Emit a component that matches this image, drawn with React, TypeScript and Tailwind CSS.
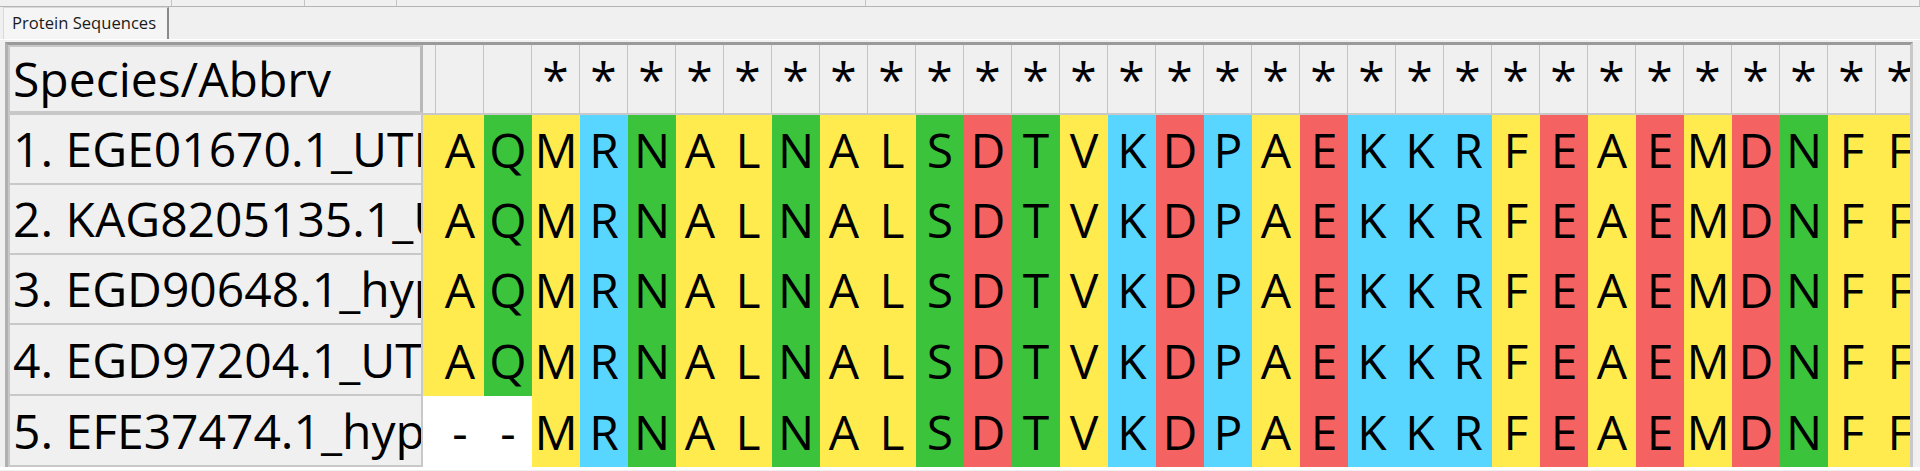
const seqA = 'AQMRNALNALSDTVKDPAEKKRFEAEMDNFF';
const seqB = '--MRNALNALSDTVKDPAEKKRFEAEMDNFF';

const rows = [
  { name: '1. EGE01670.1_UTR', lead: 'A', seq: seqA },
  { name: '2. KAG8205135.1_UTR', lead: 'A', seq: seqA },
  { name: '3. EGD90648.1_hypo', lead: 'A', seq: seqA },
  { name: '4. EGD97204.1_UTR', lead: 'A', seq: seqA },
  { name: '5. EFE37474.1_hypo', lead: '-', seq: seqB },
];

const residueColor: Record<string, string> = {
  A: 'bg-[#ffeb4e]',
  M: 'bg-[#ffeb4e]',
  L: 'bg-[#ffeb4e]',
  V: 'bg-[#ffeb4e]',
  F: 'bg-[#ffeb4e]',
  Q: 'bg-[#3bc43b]',
  N: 'bg-[#3bc43b]',
  S: 'bg-[#3bc43b]',
  T: 'bg-[#3bc43b]',
  R: 'bg-[#59d6ff]',
  K: 'bg-[#59d6ff]',
  P: 'bg-[#59d6ff]',
  D: 'bg-[#f46262]',
  E: 'bg-[#f46262]',
  '-': 'bg-white',
};

const font = { fontFamily: '"Open Sans", "Noto Sans", sans-serif' };

const Cell = ({ ch }: { ch: string }) => (
  <div
    className={`w-[48px] shrink-0 h-full flex items-center justify-center text-[48px] leading-none text-black ${residueColor[ch]}`}
  >
    {ch}
  </div>
);

const App = () => {
  return (
    <div className="w-[1920px] h-[471px] bg-[#f0f0f0] overflow-hidden" style={font}>
      {/* top strip */}
      <div className="h-[7px] flex border-b border-[#b4b4b4]">
        <div className="w-[172px] border-r border-[#c4c4c4]" />
        <div className="w-[133px] border-r border-[#c4c4c4]" />
        <div className="w-[92px] border-r border-[#c4c4c4]" />
        <div className="w-[469px] border-r border-[#c4c4c4]" />
        <div className="flex-1 border-r border-[#c4c4c4]" />
      </div>

      {/* tab bar */}
      <div className="h-[33px] flex items-end pl-[3px] pt-[2px] border-b border-white">
        <div className="w-[166px] h-[32px] bg-[#f5f5f5] border-l border-t border-[#d9d9d9] border-r-2 border-r-[#8a8a8a] pl-[8px] pt-[5px] text-[16.6px] leading-[20px] text-[#1a1a1a] whitespace-nowrap">
          Protein Sequences
        </div>
      </div>

      {/* alignment frame */}
      <div className="mt-[2px] ml-[5px] w-[1908px] border-t-[3px] border-l-[3px] border-r-[3px] border-t-[#9a9a9a] border-l-[#b0b0b0] border-r-[#c8c8c8] overflow-hidden">
        {/* header row */}
        <div className="h-[70px] flex border-b-2 border-[#c8c8c8]">
          <div className="w-[415px] shrink-0 border-2 border-[#c8c8c8] border-r-[3px] border-r-[#b8b8b8] flex items-center pl-[3px] text-[48px] leading-none text-black overflow-hidden whitespace-nowrap">
            Species/Abbrv
          </div>
          <div className="w-[13px] shrink-0 border-r border-[#c4c4c4]" />
          {seqA.split('').map((_, i) => (
            <div
              key={i}
              className="w-[48px] shrink-0 border-r border-[#c4c4c4] flex items-center justify-center text-[48px] leading-none text-black"
            >
              {i >= 2 ? '*' : ''}
            </div>
          ))}
        </div>

        {/* sequence rows */}
        {rows.map((r, ri) => (
          <div key={ri} className={`${ri < 3 ? 'h-[70px]' : 'h-[71px]'} flex`}>
            <div className="w-[415px] shrink-0 border-2 border-t-0 border-[#c8c8c8] flex items-center pl-[3px] text-[48px] leading-none text-black overflow-hidden whitespace-nowrap bg-[#f0f0f0]">
              {r.name}
            </div>
            <div className={`w-[13px] shrink-0 h-full ${residueColor[r.lead]}`} />
            {r.seq.split('').map((ch, i) => (
              <Cell key={i} ch={ch} />
            ))}
          </div>
        ))}
      </div>
      <div className="h-[3px] bg-white" />
    </div>
  );
};

export default App;
